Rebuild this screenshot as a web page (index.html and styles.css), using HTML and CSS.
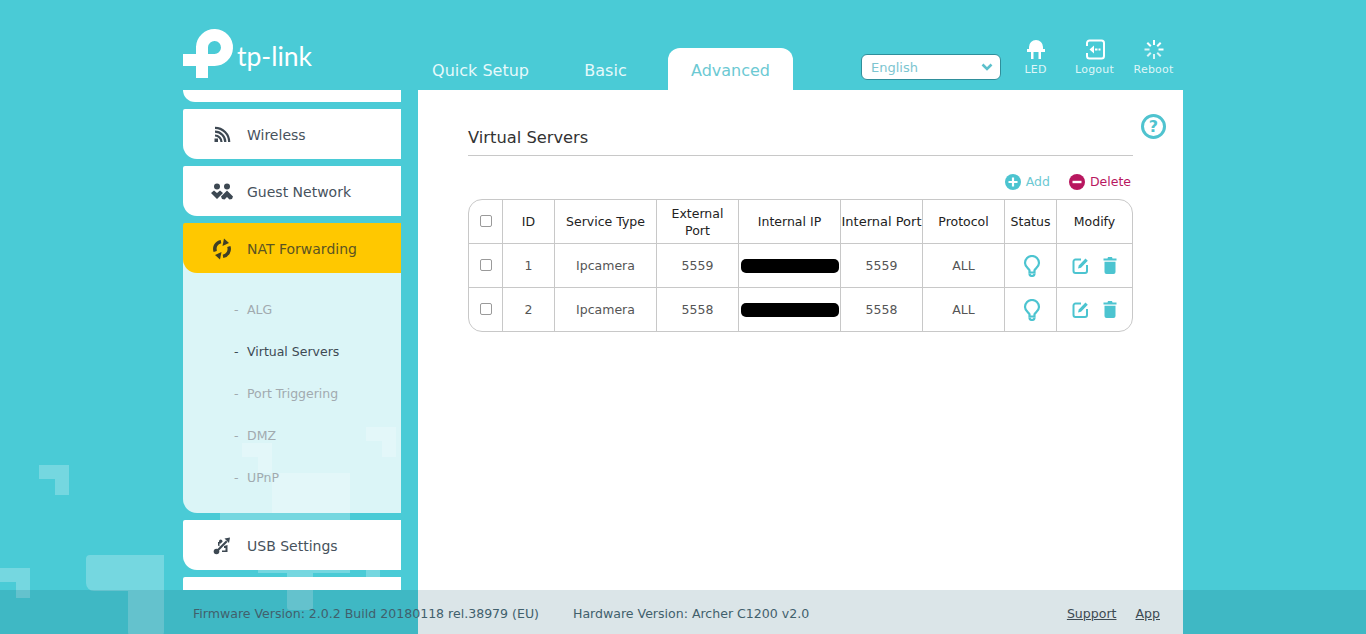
FILE: index.html
```html
<!DOCTYPE html>
<html lang="en">
<head>
<meta charset="utf-8">
<title>Virtual Servers</title>
<link rel="stylesheet" href="styles.css">
</head>
<body>
<svg class="decor" width="1366" height="634" viewBox="0 0 1366 634" aria-hidden="true">
  <g class="decor-shapes">
    <path d="M39 465h30v30h-14v-16h-16z"/>
    <path d="M0 568h30v30h-14v-16h-16z"/>
    <path d="M90 555h74v77a3 3 0 0 1-3 3h-30a3 3 0 0 1-3-3v-41h-34a8 8 0 0 1-8-8v-24a4 4 0 0 1 4-4z"/>
    <path d="M366 427h30v30h-14v-16h-16z"/>
    <path d="M242 443h30v30h-14v-16h-16z"/>
    <path d="M272 473h78v100h-37v34a3 3 0 0 1-3 3h-20a3 3 0 0 1-3-3v-34h-29v-41h-38v-19h52z"/>
    <rect x="366" y="560" width="14" height="20"/>
  </g>
</svg>
<div class="page">
  <header class="header">
    <div class="logo">
      <svg class="logo-mark" width="52" height="52" viewBox="0 0 52 52" aria-hidden="true">
        <path d="M19 50V19A12.500 12.500 0 1 1 31 32H0" fill="none" stroke="#fff" stroke-width="12"/>
      </svg>
      <span class="logo-text">tp-link</span>
    </div>
    <nav class="tabs">
      <a class="tab">Quick Setup</a>
      <a class="tab">Basic</a>
      <a class="tab tab-active">Advanced</a>
    </nav>
    <div class="header-right">
      <div class="lang">
        <span>English</span>
        <svg width="12" height="8" viewBox="0 0 12 8" aria-hidden="true"><path d="M1.500 1.500 6 6l4.500-4.500" fill="none" stroke="#5cc0cc" stroke-width="2.600"/></svg>
      </div>
      <div class="tool">
        <svg width="22" height="21" viewBox="0 0 22 21" aria-hidden="true">
          <path d="M4 10V8a7 7 0 0 1 14 0v2h2v3H2v-3z" fill="#fff"/>
          <rect x="6" y="13" width="2.500" height="7" fill="#fff"/>
          <rect x="13.500" y="13" width="2.500" height="7" fill="#fff"/>
        </svg>
        <span>LED</span>
      </div>
      <div class="tool">
        <svg width="22" height="21" viewBox="0 0 22 21" aria-hidden="true">
          <path d="M3 7V4a2.500 2.500 0 0 1 2.500-2.500h12A2.500 2.500 0 0 1 20 4v13a2.500 2.500 0 0 1-2.500 2.500h-12A2.500 2.500 0 0 1 3 17v-3" fill="none" stroke="#fff" stroke-width="2"/>
          <path d="M5.500 10.500 10 6.500v8z" fill="#fff"/>
          <rect x="11" y="9.500" width="2.500" height="2" fill="#fff"/>
          <rect x="14.500" y="9.500" width="2" height="2" fill="#fff"/>
        </svg>
        <span>Logout</span>
      </div>
      <div class="tool">
        <svg width="22" height="21" viewBox="0 0 22 21" aria-hidden="true">
          <g stroke="#fff" stroke-width="2" fill="none">
            <path d="M11 1v5"/><path d="M11 15v5" opacity=".8"/><path d="M1.500 10.500h5" opacity=".8"/><path d="M15.500 10.500h5"/>
            <path d="M4.300 3.800 7.800 7.300"/><path d="M17.700 3.800 14.200 7.300"/><path d="M4.300 17.200 7.800 13.700" opacity=".8"/><path d="M17.700 17.200 14.200 13.700" opacity=".8"/>
          </g>
        </svg>
        <span>Reboot</span>
      </div>
    </div>
  </header>

  <div class="body">
    <aside class="sidebar">
      <div class="item item-stub"></div>
      <a class="item">
        <span class="item-icon">
          <svg width="18" height="18" viewBox="0 0 18 18" aria-hidden="true">
            <g fill="none" stroke="#3d4852" stroke-width="2.200"><path d="M2 9.500A6.500 6.500 0 0 1 8.500 16"/><path d="M2 5.700A10.300 10.300 0 0 1 12.300 16"/><path d="M2 1.800A14.200 14.200 0 0 1 16.200 16"/></g>
            <rect x="1.500" y="12.500" width="3.500" height="3.500" fill="#3d4852"/>
          </svg>
        </span>
        <span>Wireless</span>
      </a>
      <a class="item">
        <span class="item-icon">
          <svg width="24" height="18" viewBox="0 0 24 18" aria-hidden="true">
            <g fill="#3d4852">
              <circle cx="7" cy="3.500" r="3"/><circle cx="17" cy="3.500" r="3"/>
              <path d="M1 10l3-2.500 3 2.500 3-2.500 3 2.500-6 6z"/>
              <path d="M17 7.500l6 6-1 2.500-2.500.500-2.500-2.500-2.500 2.500-2.500-.500-1-2.500z"/>
            </g>
          </svg>
        </span>
        <span>Guest Network</span>
      </a>
      <a class="item item-active">
        <span class="item-icon">
          <svg width="22" height="22" viewBox="0 0 22 22" aria-hidden="true">
            <g fill="none" stroke="#3f3f26" stroke-width="3.400">
              <path d="M4.200 13.500A7.500 7.500 0 0 1 10 3.600"/>
              <path d="M17.800 8.500A7.500 7.500 0 0 1 12 18.400"/>
            </g>
            <path d="M13 0.500l5 4.500-6.500 3z" fill="#3f3f26"/>
            <path d="M9 21.500l-5-4.500 6.500-3z" fill="#3f3f26"/>
          </svg>
        </span>
        <span>NAT Forwarding</span>
      </a>
      <ul class="submenu">
        <li>ALG</li>
        <li class="sub-active">Virtual Servers</li>
        <li>Port Triggering</li>
        <li>DMZ</li>
        <li>UPnP</li>
      </ul>
      <a class="item">
        <span class="item-icon">
          <svg width="18" height="18" viewBox="0 0 18 18" aria-hidden="true">
            <g fill="#3d4852">
              <circle cx="3.500" cy="14.500" r="2.800"/>
              <path d="M3 13.500 13 3.500l1.500 1.500-10 10z"/>
              <path d="M11.500 1.500 17 .5l-1 5.500z"/>
              <path d="M5 8.500V5h3v1.500H6.500v3z"/>
              <rect x="6" y="2.600" width="3.400" height="3.400" rx="1.700"/>
              <path d="M9 13.500h3.500V11H11V9l3.500-1v7H9z"/>
            </g>
          </svg>
        </span>
        <span>USB Settings</span>
      </a>
      <div class="item"></div>
    </aside>

    <main class="panel">
      <div class="content">
        <h1 class="title">Virtual Servers</h1>
        <div class="actions">
          <a class="action action-add">
            <svg width="16" height="16" viewBox="0 0 16 16" aria-hidden="true"><circle cx="8" cy="8" r="8" fill="#4cc4d0"/><path d="M8 3.500v9M3.500 8h9" stroke="#fff" stroke-width="2.200"/></svg>
            <span>Add</span>
          </a>
          <a class="action action-del">
            <svg width="16" height="16" viewBox="0 0 16 16" aria-hidden="true"><circle cx="8" cy="8" r="8" fill="#b8175f"/><path d="M3.500 8h9" stroke="#fff" stroke-width="2.400"/></svg>
            <span>Delete</span>
          </a>
        </div>
        <table class="grid">
          <thead>
            <tr>
              <th class="c-check"><input class="check" type="checkbox"></th>
              <th class="c-id">ID</th>
              <th class="c-type">Service Type</th>
              <th class="c-ext">External<br>Port</th>
              <th class="c-ip">Internal IP</th>
              <th class="c-int">Internal Port</th>
              <th class="c-proto">Protocol</th>
              <th class="c-status">Status</th>
              <th class="c-mod">Modify</th>
            </tr>
          </thead>
          <tbody>
            <tr>
              <td><input class="check" type="checkbox"></td>
              <td>1</td>
              <td>Ipcamera</td>
              <td>5559</td>
              <td><span class="redact"></span></td>
              <td>5559</td>
              <td>ALL</td>
              <td>
                <svg class="row-icon" width="18" height="22" viewBox="0 0 18 22" aria-hidden="true"><path d="M6.500 17.500v-2.200C6.200 13.800 2 12.500 2 8a7 7 0 0 1 14 0c0 4.500-4.200 5.800-4.500 7.300v2.200z" fill="none" stroke="#4cc4d0" stroke-width="2.200"/><path d="M6.500 18.500a2.500 2.500 0 0 0 5 0" fill="none" stroke="#4cc4d0" stroke-width="2.200"/></svg>
              </td>
              <td>
                <span class="row-tools">
                  <svg width="17" height="17" viewBox="0 0 17 17" aria-hidden="true"><path d="M9 2.500H3.500a2 2 0 0 0-2 2v9.500a2 2 0 0 0 2 2h9.500a2 2 0 0 0 2-2V8" fill="none" stroke="#4cc4d0" stroke-width="2"/><path d="M6 11.500l.8-3L13.500 1.500l2.300 2.300-6.800 7z" fill="#4cc4d0"/></svg>
                  <svg width="14" height="17" viewBox="0 0 14 17" aria-hidden="true"><path d="M5 0h4l.5 1.500H13.500V3.500H.5V1.500H4.500z" fill="#4cc4d0"/><path d="M1.500 4.800h11V15a2 2 0 0 1-2 2h-7a2 2 0 0 1-2-2z" fill="#4cc4d0"/></svg>
                </span>
              </td>
            </tr>
            <tr>
              <td><input class="check" type="checkbox"></td>
              <td>2</td>
              <td>Ipcamera</td>
              <td>5558</td>
              <td><span class="redact"></span></td>
              <td>5558</td>
              <td>ALL</td>
              <td>
                <svg class="row-icon" width="18" height="22" viewBox="0 0 18 22" aria-hidden="true"><path d="M6.500 17.500v-2.200C6.200 13.800 2 12.500 2 8a7 7 0 0 1 14 0c0 4.500-4.200 5.800-4.500 7.300v2.200z" fill="none" stroke="#4cc4d0" stroke-width="2.200"/><path d="M6.500 18.500a2.500 2.500 0 0 0 5 0" fill="none" stroke="#4cc4d0" stroke-width="2.200"/></svg>
              </td>
              <td>
                <span class="row-tools">
                  <svg width="17" height="17" viewBox="0 0 17 17" aria-hidden="true"><path d="M9 2.500H3.500a2 2 0 0 0-2 2v9.500a2 2 0 0 0 2 2h9.500a2 2 0 0 0 2-2V8" fill="none" stroke="#4cc4d0" stroke-width="2"/><path d="M6 11.500l.8-3L13.500 1.500l2.300 2.300-6.800 7z" fill="#4cc4d0"/></svg>
                  <svg width="14" height="17" viewBox="0 0 14 17" aria-hidden="true"><path d="M5 0h4l.5 1.500H13.500V3.500H.5V1.500H4.500z" fill="#4cc4d0"/><path d="M1.500 4.800h11V15a2 2 0 0 1-2 2h-7a2 2 0 0 1-2-2z" fill="#4cc4d0"/></svg>
                </span>
              </td>
            </tr>
          </tbody>
        </table>
      </div>
      <div class="help">?</div>
    </main>
  </div>
</div>
<footer class="footer">
  <div class="footer-inner">
    <span>Firmware Version: 2.0.2 Build 20180118 rel.38979 (EU)</span>
    <span class="hw">Hardware Version: Archer C1200 v2.0</span>
    <a class="foot-link foot-support">Support</a>
    <a class="foot-link foot-app">App</a>
  </div>
</footer>
</body>
</html>
```

FILE: styles.css
```css
* { box-sizing: border-box; }
html, body { height: 100%; }
body {
  margin: 0;
  height: 634px;
  overflow: hidden;
  background: #4acbd6;
  font-family: "DejaVu Sans", Verdana, sans-serif;
  font-size: 13px;
  color: #555;
  position: relative;
}
.decor { position: absolute; left: 0; top: 0; }
.decor-shapes { fill: #fff; fill-opacity: .24; }
.page {
  position: relative;
  width: 1000px;
  height: 634px;
  margin: 0 0 0 183px;
  display: flex;
  flex-direction: column;
}

/* header */
.header { height: 90px; display: flex; flex: none; }
.logo { width: 235px; padding-top: 28px; display: flex; align-items: flex-start; }
.logo-mark { flex: none; }
.logo-text {
  font-family: Lato, sans-serif;
  font-size: 26.500px;
  line-height: 34px;
  color: #fff;
  margin: 11px 0 0 2px;
}
.tabs { display: flex; align-items: flex-end; }
.tab {
  width: 125px;
  height: 42px;
  padding-top: 11px;
  text-align: center;
  font-size: 16px;
  line-height: 24px;
  color: #e6f9fb;
}
.tab-active {
  background: #fff;
  color: #6cc9d3;
  border-radius: 12px 12px 0 0;
}
.header-right { margin-left: auto; display: flex; align-items: flex-start; padding-top: 39px; }
.lang {
  width: 140px;
  height: 26px;
  margin: 15px 5px 0 0;
  padding: 0 7px 0 9px;
  background: #fff;
  border: 1px solid #2f8f9b;
  border-radius: 6px;
  display: flex;
  align-items: center;
  justify-content: space-between;
  font-size: 13px;
  color: #7cc5d0;
}
.tool {
  width: 59px;
  display: flex;
  flex-direction: column;
  align-items: center;
  color: #dff6f8;
  font-size: 11px;
  letter-spacing: .2px;
  line-height: 12px;
  gap: 4px;
}
.tool svg { display: block; }

/* layout */
.body { flex: 1; display: flex; min-height: 0; }

/* sidebar */
.sidebar { width: 218px; height: 500px; overflow: hidden; flex: none; }
.item {
  display: flex;
  align-items: center;
  height: 50px;
  margin-bottom: 7px;
  padding-top: 2px;
  background: #fff;
  border-radius: 2px 0 0 14px;
  font-size: 14px;
  color: #47525c;
}
.item-stub { height: 12px; padding-top: 0; border-radius: 0 0 0 12px; }
.item-icon { width: 64px; padding-left: 14px; display: flex; justify-content: center; flex: none; }
.item-icon svg { display: block; }
.item-active { position: relative; margin-bottom: 0; background: #ffc800; color: #5b5422; }
.submenu {
  list-style: none;
  margin: -14px 0 7px;
  padding: 30px 0 0;
  height: 254px;
  background: rgba(255, 255, 255, .8);
  border-radius: 0 0 0 14px;
}
.submenu li {
  position: relative;
  height: 42px;
  line-height: 42px;
  padding-left: 64px;
  font-size: 12.500px;
  color: #a1aaaf;
}
.submenu li::before {
  content: "-";
  position: absolute;
  left: 51px;
}
.submenu .sub-active { color: #3e4a54; }

/* panel */
.panel {
  margin-left: 17px;
  width: 765px;
  background: #fff;
  display: grid;
  grid-template-columns: 50px 665px 50px;
  align-items: start;
}
.content { grid-column: 2; padding-top: 37px; }
.title {
  margin: 0;
  height: 29px;
  border-bottom: 1px solid #c8c8c8;
  font-size: 16.300px;
  line-height: 22px;
  font-weight: 400;
  color: #333;
}
.actions {
  height: 43px;
  padding: 18px 2px 0 0;
  display: flex;
  justify-content: flex-end;
  gap: 19px;
  font-size: 12.500px;
  line-height: 16px;
}
.action { display: flex; align-items: center; height: 16px; gap: 5px; }
.action svg { display: block; }
.action-add { color: #6cc9d3; }
.action-del { color: #b8175f; }

.grid {
  width: 665px;
  table-layout: fixed;
  border-collapse: separate;
  border-spacing: 0;
  border: 1px solid #c8c8c8;
  border-radius: 14px;
  font-size: 12.500px;
}
.grid th, .grid td {
  height: 44px;
  padding: 0;
  text-align: center;
  vertical-align: middle;
  border-right: 1px solid #c8c8c8;
  border-bottom: 1px solid #c8c8c8;
  font-weight: 400;
  line-height: 17px;
  white-space: nowrap;
}
.grid th { color: #222; }
.grid td { color: #555; }
.grid th:last-child, .grid td:last-child { border-right: 0; }
.grid tbody tr:last-child td { border-bottom: 0; height: 43px; }
.c-check { width: 34px; }
.c-id { width: 52px; }
.c-type { width: 102px; }
.c-ext { width: 82px; }
.c-ip { width: 102px; }
.grid .c-int { width: 82px; font-size: 13px; }
.c-proto { width: 82px; }
.c-status { width: 52px; }
.c-mod { width: auto; }
.check {
  appearance: none;
  display: block;
  width: 12px;
  height: 12px;
  margin: -2px auto 0;
  border: 1px solid #9a9a9a;
  border-radius: 2px;
  background: #fff;
}
.redact {
  display: block;
  width: 98px;
  height: 14px;
  margin: 0 auto;
  background: #000;
  border-radius: 5px;
}
.row-icon { display: block; margin: 0 auto; }
.grid td:nth-child(8) { padding-left: 2px; }
.row-tools { display: flex; justify-content: center; align-items: center; gap: 14px; }
.row-tools svg { display: block; }

.help {
  grid-column: 3;
  grid-row: 1;
  width: 25px;
  height: 25px;
  margin: 24px 0 0 8px;
  border: 3px solid #4fc3cf;
  border-radius: 50%;
  color: #4fc3cf;
  font-size: 16px;
  font-weight: 700;
  line-height: 19px;
  text-align: center;
}

/* footer */
.footer {
  position: absolute;
  left: 0;
  right: 0;
  bottom: 0;
  height: 44px;
  background: rgba(0, 70, 90, .14);
}
.footer-inner {
  width: 1000px;
  margin-left: 183px;
  padding: 2px 23px 0 10px;
  height: 44px;
  display: flex;
  align-items: center;
  font-size: 12.560px;
  color: #41606c;
}
.hw { margin-left: 34px; }
.foot-link { text-decoration: underline; color: #3d4a52; }
.foot-support { margin-left: auto; }
.foot-app { margin-left: 19px; }
```
